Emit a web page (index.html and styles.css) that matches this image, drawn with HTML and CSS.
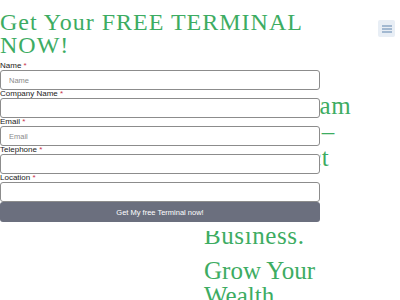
FILE: index.html
```html
<!DOCTYPE html>
<html lang="en">
<head>
<meta charset="utf-8">
<title>Get Your FREE TERMINAL NOW!</title>
<link rel="stylesheet" href="styles.css">
</head>
<body>
<div class="page">
  <header class="topbar">
    <button class="menu-btn" aria-label="Menu">
      <svg width="10" height="8" viewBox="0 0 10 8"><path d="M0 1h10M0 4h10M0 7h10" stroke="#5f84ad" stroke-width="1.2"/></svg>
    </button>
  </header>
  <section class="hero">
    <div class="hero-spacer"></div>
    <div class="hero-text">
      <h2 class="hero-title">
        <span class="line">Join the Team</span>
        <span class="line">Faster Pay –</span>
        <span class="line">Cash Direct</span>
        <span class="line">Built for</span>
        <span class="line">Every</span>
        <span class="line">Business.</span>
      </h2>
      <p class="hero-sub">Grow Your Wealth</p>
    </div>
  </section>
</div>

<div class="popup">
  <h1 class="popup-title">Get Your FREE TERMINAL NOW!</h1>
  <form class="lead-form">
    <div class="field">
      <label for="f-name">Name <span class="req">*</span></label>
      <input id="f-name" type="text" placeholder="Name">
    </div>
    <div class="field">
      <label for="f-company">Company Name <span class="req">*</span></label>
      <input id="f-company" type="text">
    </div>
    <div class="field">
      <label for="f-email">Email <span class="req">*</span></label>
      <input id="f-email" type="email" placeholder="Email">
    </div>
    <div class="field">
      <label for="f-tel">Telephone <span class="req">*</span></label>
      <input id="f-tel" type="tel">
    </div>
    <div class="field">
      <label for="f-loc">Location <span class="req">*</span></label>
      <input id="f-loc" type="text">
    </div>
    <button type="button" class="submit">Get My free Terminal now!</button>
  </form>
</div>
</body>
</html>
```
FILE: styles.css
```css
* { box-sizing: border-box; }
html, body { margin: 0; padding: 0; background: #fff; }
body { font-family: "Liberation Sans", Arial, sans-serif; overflow: hidden; height: 300px; }

.page { width: 400px; }
.topbar {
  display: flex;
  justify-content: flex-end;
  padding: 20px 5px 0 0;
  height: 93px;
}
.menu-btn {
  width: 17px;
  height: 17px;
  border: none;
  border-radius: 2px;
  background: #e8eef5;
  padding: 0;
  display: flex;
  align-items: center;
  justify-content: center;
}
.menu-btn svg { display: block; }

.hero {
  display: grid;
  grid-template-columns: 204px 1fr;
}
.hero-title, .hero-sub {
  margin: 0;
  font-family: "Liberation Serif", "Times New Roman", serif;
  font-weight: normal;
  color: #3dac62;
  font-size: 25px;
  line-height: 26px;
  white-space: nowrap;
}
.hero-title .line { display: block; }
.hero-title { letter-spacing: 0.6px; }
.hero-sub { margin-top: 9px; line-height: 25px; width: 130px; white-space: normal; }

.popup {
  position: absolute;
  top: 0;
  left: 0;
  width: 320px;
  background: #fff;
  padding: 11px 0 9px;
}
.popup-title {
  margin: 0 0 5px;
  font-family: "Liberation Serif", "Times New Roman", serif;
  font-weight: normal;
  font-size: 24px;
  line-height: 23px;
  letter-spacing: 1px;
  color: #3dac62;
  width: 330px;
}
.lead-form { display: flex; flex-direction: column; }
.field { display: flex; flex-direction: column; }
.field label {
  font-size: 8px;
  line-height: 8px;
  color: #222;
}
.req { color: #c8304a; }
.field input {
  height: 20px;
  width: 100%;
  margin: 0;
  border: 1px solid #8c8c8c;
  border-radius: 3px;
  padding: 0 8px;
  font-family: "Liberation Sans", Arial, sans-serif;
  font-size: 7.5px;
  color: #333;
  background: #fff;
  outline: none;
}
.field input::placeholder { color: #8a8a8a; }
.submit {
  height: 20px;
  width: 100%;
  margin: 0;
  border: none;
  border-radius: 3px;
  background: #6b6f7e;
  color: #fff;
  font-family: "Liberation Sans", Arial, sans-serif;
  font-size: 7.5px;
  padding: 0;
}
```
